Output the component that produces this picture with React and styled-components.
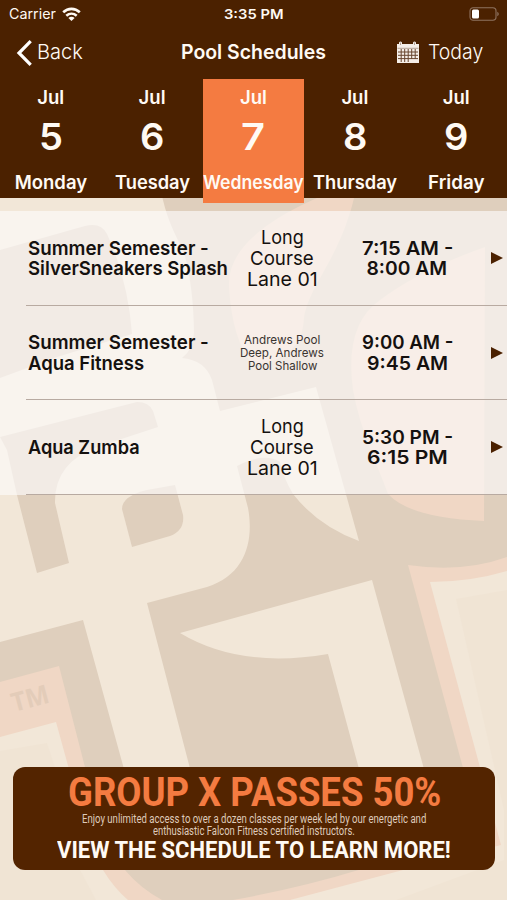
import React, { useLayoutEffect, useRef, useState } from 'react';
import styled, { createGlobalStyle, ThemeProvider } from 'styled-components';

const theme = {
  colors: {
    brown: '#4b2100',
    banner: '#532400',
    orange: '#f47b41',
    tan: '#dfcfbd',
    cream: '#f2e7d8',
    creamDark: '#f0e4d4',
    peach: '#f0d7c5',
    white: '#fffaf4',
    text: '#15110f',
  },
  fonts: {
    main: "Inter, 'Liberation Sans', sans-serif",
    condensed: "Roboto, 'Liberation Sans', sans-serif",
  },
};

const GlobalStyle = createGlobalStyle`
  * {
    box-sizing: border-box;
  }

  body {
    margin: 0;
    overflow: hidden;
  }
`;

const Screen = styled.div`
  position: relative;
  width: 507px;
  height: 900px;
  overflow: hidden;
  display: flex;
  flex-direction: column;
  background: ${({ theme }) => theme.colors.tan};
  font-family: ${({ theme }) => theme.fonts.main};
`;

const Artwork = styled.svg`
  position: absolute;
  top: 0;
  left: 0;
  z-index: 0;
`;

const Header = styled.header`
  position: relative;
  z-index: 1;
  height: 198px;
  background: ${({ theme }) => theme.colors.brown};
  color: ${({ theme }) => theme.colors.white};
`;

const StatusBar = styled.div`
  height: 28px;
  padding: 0 8px 0 9px;
  display: grid;
  grid-template-columns: 1fr auto 1fr;
  align-items: center;
`;

StatusBar.Side = styled.div`
  display: flex;
  align-items: center;
  gap: 6px;
  justify-content: ${({ $end }) => ($end ? 'flex-end' : 'flex-start')};
`;

const NavBar = styled.nav`
  height: 51px;
  padding: 0 16px 2px;
  display: grid;
  grid-template-columns: 1fr auto 1fr;
  align-items: center;
`;

NavBar.Button = styled.button`
  display: flex;
  align-items: center;
  gap: ${({ $gap }) => $gap};
  justify-self: ${({ $end }) => ($end ? 'end' : 'start')};
  margin: 0 ${({ $end }) => ($end ? '8px' : 0)} 0 0;
  padding: 0;
  border: none;
  background: none;
  color: inherit;
  font-family: inherit;
  cursor: pointer;
`;

const Days = styled.div`
  display: grid;
  grid-template-columns: repeat(5, 1fr);
  align-items: start;
`;

const Day = styled.div`
  height: ${({ $active }) => ($active ? '123.5px' : '119px')};
  padding-top: 8px;
  display: flex;
  flex-direction: column;
  align-items: center;
  background: ${({ theme, $active }) => ($active ? theme.colors.orange : 'transparent')};
`;

const Schedule = styled.ul`
  position: relative;
  z-index: 1;
  margin: 13px 0 0;
  padding: 0;
  list-style: none;
  background: rgba(252, 251, 250, 0.65);
  color: ${({ theme }) => theme.colors.text};
`;

const Row = styled.li`
  height: 94.5px;
  padding-left: 28px;
  display: grid;
  grid-template-columns: 207px 94px 156px 1fr;
  align-items: center;
  background: linear-gradient(#b8aaa1, #b8aaa1) 26px 100% / 100% 1px no-repeat;
`;

const Cell = styled.div`
  display: flex;
  flex-direction: column;
  align-items: ${({ $center }) => ($center ? 'center' : 'flex-start')};
`;

const Arrow = styled.span`
  width: 0;
  height: 0;
  margin-left: 6px;
  border-left: 12px solid ${({ theme }) => theme.colors.brown};
  border-top: 6px solid transparent;
  border-bottom: 6px solid transparent;
`;

const Banner = styled.aside`
  position: relative;
  z-index: 1;
  width: 482px;
  height: 103px;
  margin: auto 0 30px 13px;
  padding-top: 4px;
  display: flex;
  flex-direction: column;
  align-items: center;
  border-radius: 12px;
  background: ${({ theme }) => theme.colors.banner};
  color: ${({ theme }) => theme.colors.white};
  font-family: ${({ theme }) => theme.fonts.condensed};
`;

const LineBox = styled.span`
  display: block;
  width: ${({ $width }) => $width}px;
  height: ${({ $height }) => $height}px;
  line-height: ${({ $height }) => $height}px;
  font-size: ${({ $size }) => $size}px;
  font-weight: ${({ $weight }) => $weight};
  color: ${({ $color }) => $color || 'inherit'};
  white-space: nowrap;
  text-align: left;
`;

const LineText = styled.span`
  display: inline-block;
  transform-origin: 0 50%;
`;

// One line of text, stretched or squeezed to the given width.
const Line = ({ width, size, weight = 400, height = 20.7, color, children }) => {
  const ref = useRef(null);
  const [scale, setScale] = useState(1);

  useLayoutEffect(() => {
    setScale(width / ref.current.offsetWidth);
  }, [width, children]);

  return (
    <LineBox $width={width} $height={height} $size={size} $weight={weight} $color={color}>
      <LineText ref={ref} style={{ transform: `scaleX(${scale})` }}>
        {children}
      </LineText>
    </LineBox>
  );
};

const days = [
  { date: 5, name: 'Monday', width: 72 },
  { date: 6, name: 'Tuesday', width: 75 },
  { date: 7, name: 'Wednesday', width: 101, active: true },
  { date: 8, name: 'Thursday', width: 84 },
  { date: 9, name: 'Friday', width: 57 },
];

const longCourse = [['Long', 43], ['Course', 64], ['Lane 01', 71]];

const classes = [
  {
    title: [['Summer Semester -', 181], ['SilverSneakers Splash', 200]],
    room: longCourse,
    time: [['7:15 AM -', 91], ['8:00 AM', 81]],
  },
  {
    title: [['Summer Semester -', 181], ['Aqua Fitness', 116]],
    room: [['Andrews Pool', 76], ['Deep, Andrews', 84], ['Pool Shallow', 69]],
    smallRoom: true,
    time: [['9:00 AM -', 91], ['9:45 AM', 81]],
  },
  {
    title: [['Aqua Zumba', 112]],
    room: longCourse,
    time: [['5:30 PM -', 91], ['6:15 PM', 81]],
  },
];

const WifiIcon = () => (
  <svg width="19" height="15" viewBox="0 0 19 15" fill="none" stroke="#fffaf4" strokeWidth="2.6">
    <path d="M1.2 5.3C6 .7 13 .7 17.8 5.3" />
    <path d="M4.3 8.7C7.4 6 11.6 6 14.7 8.7" />
    <path d="M9.5 14L6.4 11C8.2 9.4 10.8 9.4 12.6 11Z" fill="#fffaf4" stroke="none" />
  </svg>
);

const BatteryIcon = () => (
  <svg width="30" height="15" viewBox="0 0 30 15" fill="none">
    <rect x="1" y=".8" width="26" height="12.4" rx="3.2" stroke="#8f735f" strokeWidth="1.1" />
    <rect x="3" y="2.6" width="7" height="8.8" rx="1.5" fill="#fff" />
    <path d="M28.3 4.8C30.2 5.8 30.2 8.2 28.3 9.2Z" fill="#8f735f" />
  </svg>
);

const BackIcon = () => (
  <svg width="16" height="26" viewBox="0 0 16 26" fill="none" stroke="#fff" strokeWidth="3.2">
    <path d="M14.7 1.2L3 13L14.7 24.8" />
  </svg>
);

const CalendarIcon = () => (
  <svg width="24" height="23" viewBox="0 0 24 23">
    <path d="M1 3H3V1.5Q4.5-.5 6 1.5V3H17V1.5Q18.5-.5 20 1.5V3H23V22H1Z" fill="#f5eee8" />
    <path d="M1.5 7.3H22.5M4.5 1.5V4M18.5 1.5V4" stroke="#a28e80" strokeWidth=".8" />
    <path
      d="M2 11H22M2 14.3H22M2 17.6H22M5.2 8V21M8.7 8V21M12.2 8V21M15.7 8V18M19.2 8V18"
      stroke="#68462f"
      strokeWidth="1"
    />
  </svg>
);

const Background = () => {
  const { cream, creamDark, peach, tan } = theme.colors;

  return (
    <Artwork width="507" height="900" viewBox="0 0 507 900" aria-hidden="true">
      {/* upper letter */}
      <path
        fill={cream}
        d="M0 190H161C165 215 175 235 183 250C190 270 194 305 194 333Q193 350 182 358Q205 360 212 380L220 411L316 387L359 541Q318 526 293 494Q283 477 280 462Q264 452 237 466L248 508C254 540 246 575 207 587L147 603L193 780H127L83 620L0 642Z"
      />
      <path fill={tan} d="M0 250L85 226Q101 222 107 234Q128 280 132 334L57 357L0 378Z" />
      <path
        fill={tan}
        d="M0 437L137 402Q149 402 153 411L158 427L97 447Q54 463 55 503L69 563L37 573L17 495L7 450Z"
      />
      <path
        fill={tan}
        d="M175 485L147 490Q122 496 122 509L132 547L170 536Q185 530 183 515Z"
      />
      {/* lower letter */}
      <path fill={cream} d="M180 633L372 580L427 780H362L328 654Q240 669 180 633Z" />
      {/* falcon feathers */}
      <path
        fill={peach}
        d="M317 198Q226 238 229 287Q232 340 253 365Q302 360 304 318C309 285 340 258 354 198Z"
      />
      <path
        fill={peach}
        d="M485 247Q420 270 380 300Q344 325 353 390C360 430 377 464 388 494Q410 518 484 521Z"
      />
      {/* outline on the left */}
      <path
        fill={peach}
        d="M0 682L59 666L87 775Q101 841 125 870Q140 888 162 900H0Z"
      />
      <path fill={cream} d="M0 737L56 722L72 780Q84 840 103 870Q114 888 128 900H0Z" />
      <path fill={creamDark} d="M0 751L47 743L59 780Q66 844 80 870L96 900H0Z" />
      {/* outline on the right */}
      <path
        fill={peach}
        d="M408 565Q463 573 507 557V900H233Q300 888 362 869L488 860Z"
      />
      <path fill={cream} d="M430 582Q470 582 507 571V900H290L403 870L501 845Z" />
      <path fill={creamDark} d="M456 599L507 590V900H396L504 860V810Z" />
      <text
        x="14"
        y="712"
        fill="#e3ccb9"
        fontFamily="'Open Sans', sans-serif"
        fontSize="26"
        fontWeight="700"
        textLength="38"
        lengthAdjust="spacingAndGlyphs"
        transform="rotate(-15 14 712)"
      >
        TM
      </text>
    </Artwork>
  );
};

const lines = (items, props) =>
  items.map(([text, width]) => (
    <Line key={text} width={width} {...props}>
      {text}
    </Line>
  ));

const App = () => (
  <ThemeProvider theme={theme}>
    <GlobalStyle />
    <Screen>
      <Background />
      <Header>
        <StatusBar>
          <StatusBar.Side>
            <Line width={47} size={14}>Carrier</Line>
            <WifiIcon />
          </StatusBar.Side>
          <Line width={60} size={13.5} weight={600}>3:35 PM</Line>
          <StatusBar.Side $end>
            <BatteryIcon />
          </StatusBar.Side>
        </StatusBar>
        <NavBar>
          <NavBar.Button $gap="5px">
            <BackIcon />
            <Line width={46} size={20.5} weight={300}>Back</Line>
          </NavBar.Button>
          <Line width={145} size={20} weight={600}>Pool Schedules</Line>
          <NavBar.Button $end $gap="8px">
            <CalendarIcon />
            <Line width={55} size={20.5} weight={300}>Today</Line>
          </NavBar.Button>
        </NavBar>
        <Days>
          {days.map(({ date, name, width, active }) => (
            <Day key={date} $active={active}>
              <Line width={27} size={18.5} weight={600} height={20}>Jul</Line>
              <Line width={24} size={36.5} weight={600} height={61}>{date}</Line>
              <Line width={width} size={18.5} weight={600} height={29}>{name}</Line>
            </Day>
          ))}
        </Days>
      </Header>
      <Schedule>
        {classes.map(({ title, room, smallRoom, time }, index) => (
          <Row key={index}>
            <Cell>{lines(title, { size: 19.3, weight: 600 })}</Cell>
            <Cell $center>
              {lines(room, smallRoom ? { size: 12, height: 13.3, color: '#3a3430' } : { size: 19.3 })}
            </Cell>
            <Cell $center>{lines(time, { size: 19.3, weight: 600 })}</Cell>
            <Arrow />
          </Row>
        ))}
      </Schedule>
      <Banner>
        <Line width={373} size={41} weight={700} height={42} color={theme.colors.orange}>
          GROUP X PASSES 50%
        </Line>
        <Line width={344} size={12} height={12} color="#dfcbbb">
          Enjoy unlimited access to over a dozen classes per week led by our energetic and
        </Line>
        <Line width={202} size={12} height={12} color="#dfcbbb">
          enthusiastic Falcon Fitness certified instructors.
        </Line>
        <Line width={394} size={24.5} weight={700} height={26}>
          VIEW THE SCHEDULE TO LEARN MORE!
        </Line>
      </Banner>
    </Screen>
  </ThemeProvider>
);

export default App;
